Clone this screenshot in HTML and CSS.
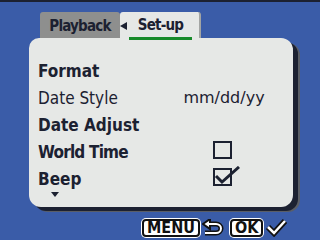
FILE: index.html
```html
<!DOCTYPE html>
<html lang="en">
<head>
	<meta charset="UTF-8">
	<title>Set-up</title>
	<link rel="stylesheet" href="styles.css">
</head>
<body>
	<div class="screen">
		<div class="tabs">
			<div class="tab tab-off">Playback</div>
			<div class="tab tab-on">
				<span class="tab-arrow"></span>
				<span class="tab-label">Set-up</span>
			</div>
		</div>
		<div class="panel">
			<div class="row">
				<span class="label">Format</span>
				<span class="value"></span>
			</div>
			<div class="row">
				<span class="label thin">Date Style</span>
				<span class="value">mm/dd/yy</span>
			</div>
			<div class="row">
				<span class="label">Date Adjust</span>
				<span class="value"></span>
			</div>
			<div class="row">
				<span class="label tight">World Time</span>
				<span class="value">
					<svg width="28" height="21" viewBox="0 0 28 21">
						<rect x="1" y="3" width="17" height="16" fill="none" stroke="#1c2131" stroke-width="2"/>
					</svg>
				</span>
			</div>
			<div class="row">
				<span class="label">Beep</span>
				<span class="value">
					<svg width="28" height="21" viewBox="0 0 28 21">
						<rect x="1" y="3" width="17" height="16" fill="none" stroke="#1c2131" stroke-width="2"/>
						<path d="M3 10 L9 16 L26 1" fill="none" stroke="#1c2131" stroke-width="3"/>
					</svg>
				</span>
			</div>
			<div class="more"></div>
		</div>
		<div class="footer">
			<span class="key">MENU</span>
			<svg class="icon" width="24" height="18" viewBox="0 0 24 18">
				<path d="M7 5 H14 A5 4.5 0 0 1 14 14 H3" fill="none" stroke="#111" stroke-width="5"/>
				<path d="M1 5 L8 0 L8 10 Z" fill="#111" stroke="#111" stroke-width="2"/>
				<path d="M7 5 H14 A5 4.5 0 0 1 14 14 H3" fill="none" stroke="#fff" stroke-width="2"/>
				<path d="M2.5 5 L7 2 L7 8 Z" fill="#fff"/>
			</svg>
			<span class="key">OK</span>
			<svg class="icon" width="22" height="19" viewBox="0 0 22 19">
				<path d="M3 9 L9 15 L20 3" fill="none" stroke="#111" stroke-width="6"/>
				<path d="M3 9 L9 15 L20 3" fill="none" stroke="#fff" stroke-width="2.5"/>
			</svg>
		</div>
	</div>
</body>
</html>
```
FILE: styles.css
```css
body {
	margin: 0;
	background: #3a5ca8;
	font-family: "DejaVu Sans Condensed", "DejaVu Sans", sans-serif;
	color: #1c2131;
}
.screen {
	width: 320px;
	height: 240px;
	border-top: 2px solid #1c2131;
	box-sizing: border-box;
	overflow: hidden;
}
.tabs {
	display: flex;
	margin: 10px 0 0 40px;
	height: 26px;
}
.tab {
	height: 26px;
	font-size: 15px;
	font-weight: bold;
	letter-spacing: -0.8px;
	border-radius: 3px 3px 0 0;
	box-sizing: border-box;
}
.tab-off {
	width: 80px;
	background: #8e8f8e;
	line-height: 28px;
	text-align: center;
}
.tab-on {
	width: 81px;
	background: #e6e8e6;
	border-right: 2px solid #a3a5a3;
	display: flex;
	align-items: center;
}
.tab-arrow {
	width: 0;
	height: 0;
	border-top: 4px solid transparent;
	border-bottom: 4px solid transparent;
	border-right: 7px solid #1c2131;
	margin: 2px 0 0 0;
}
.tab-label {
	width: 63px;
	margin-left: 2px;
	line-height: 24px;
	text-align: center;
	border-bottom: 3px solid #178a2a;
	margin-top: 2px;
}
.panel {
	margin-left: 29px;
	width: 264px;
	height: 169px;
	background: #e6e8e6;
	border-radius: 10px 12px 12px 12px;
	box-shadow: 5px 4px 0 #1c2131, 7px 5px 0 #5a5e66;
	padding: 19px 19px 0 9px;
	box-sizing: border-box;
}
.row {
	display: flex;
	align-items: center;
	height: 27px;
}
.label {
	flex: 1;
	font-size: 17px;
	font-weight: bold;
}
.label.thin {
	font-weight: normal;
}
.label.tight {
	letter-spacing: -0.8px;
}
.value {
	width: 100px;
	font-family: "DejaVu Sans", sans-serif;
	font-size: 16px;
	display: flex;
	justify-content: center;
}
.value svg {
	margin: -4px -6px 0 0;
}
.more {
	width: 0;
	height: 0;
	margin: 0 0 0 13px;
	border-left: 4px solid transparent;
	border-right: 4px solid transparent;
	border-top: 5px solid #1c2131;
}
.footer {
	display: flex;
	align-items: center;
	margin: 11px 0 0 142px;
}
.key {
	height: 14px;
	line-height: 14px;
	padding: 0 3px;
	background: #fff;
	border: 2px solid #111;
	border-radius: 4px;
	box-shadow: 0 0 0 1px #fff;
	font-size: 16px;
	font-weight: bold;
	color: #111;
}
.icon {
	margin: 0 4px 0 2px;
}
```
